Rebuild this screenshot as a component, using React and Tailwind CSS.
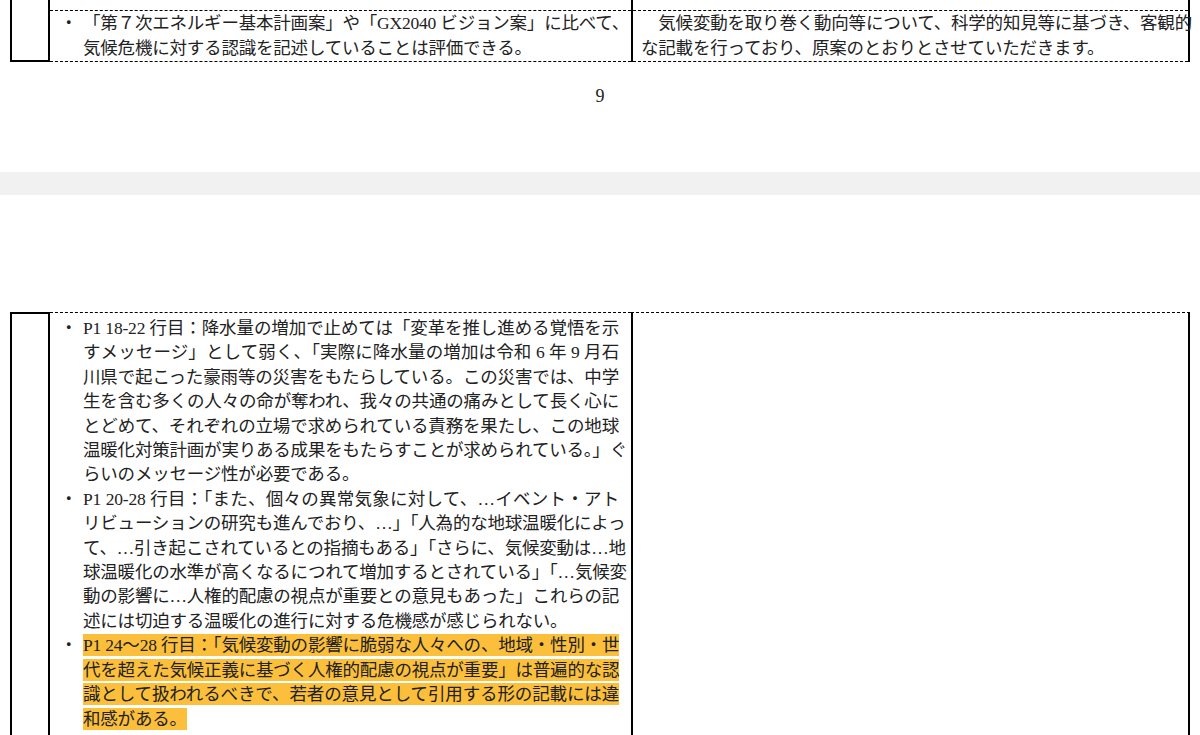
const F = { fontFamily: '"Liberation Serif", "Noto Sans CJK JP", serif' };

function L({ children, last }) {
  return (
    <div className={"whitespace-nowrap " + (last ? "" : "text-justify [text-align-last:justify]")}>{children}</div>
  );
}
function H({ children }) {
  return <span className="bg-[#fbbf3c] py-[1px]">{children}</span>;
}
function Item({ lines, hl }) {
  return (
    <div className="flex">
      <div className="w-[27px] shrink-0 pl-[4px]">・</div>
      <div className="flex-1 min-w-0">
        {lines.map((t, i) => (
          <L key={i} last={i === lines.length - 1}>{hl ? <H>{t}</H> : t}</L>
        ))}
      </div>
    </div>
  );
}

export default function App() {
  return (
    <div className="w-[1200px] h-[735px] overflow-hidden bg-white text-[#222] text-[17.5px] leading-[24.4px] tracking-[-0.2px]" style={F}>
      <div className="h-[172px] relative">
        <div className="ml-[10px] w-[1180px] flex h-[62px]">
          <div className="w-[40px] shrink-0 border-l-[2px] border-r-[2px] border-b-[2px] border-black" />
          <div className="w-[581px] shrink-0 flex flex-col">
            <div className="h-[10px]" />
            <div className="flex-1 border-t border-b border-dashed border-black pl-[6px] pr-[10px] pt-[0px] leading-[25px]">
              <Item lines={["「第７次エネルギー基本計画案」や「GX2040 ビジョン案」に比べて、", "気候危機に対する認識を記述していることは評価できる。"]} />
            </div>
          </div>
          <div className="flex-1 min-w-0 flex flex-col border-l-[2px] border-r-[2px] border-black">
            <div className="h-[10px]" />
            <div className="flex-1 border-t border-b border-dashed border-black pl-[8px] pr-[10px] pt-[0px] leading-[25px]">
              <L>　気候変動を取り巻く動向等について、科学的知見等に基づき、客観的</L>
              <L last>な記載を行っており、原案のとおりとさせていただきます。</L>
            </div>
          </div>
        </div>
        <div className="text-center text-[18px] mt-[22px]">9</div>
      </div>
      <div className="h-[23px] bg-[#f1f1f1]" />
      <div className="pt-[117px]">
        <div className="ml-[10px] w-[1180px] flex h-[500px]">
          <div className="w-[40px] shrink-0 border-l-[2px] border-r-[2px] border-t-[2px] border-black" />
          <div className="w-[581px] shrink-0 border-t border-dashed border-black pl-[6px] pr-[12px] pt-[3px]">
            <Item lines={[
              "P1 18-22 行目：降水量の増加で止めては「変革を推し進める覚悟を示",
              "すメッセージ」として弱く、「実際に降水量の増加は令和 6 年 9 月石",
              "川県で起こった豪雨等の災害をもたらしている。この災害では、中学",
              "生を含む多くの人々の命が奪われ、我々の共通の痛みとして長く心に",
              "とどめて、それぞれの立場で求められている責務を果たし、この地球",
              "温暖化対策計画が実りある成果をもたらすことが求められている。」ぐ",
              "らいのメッセージ性が必要である。",
            ]} />
            <Item lines={[
              "P1 20-28 行目：「また、個々の異常気象に対して、…イベント・アト",
              "リビューションの研究も進んでおり、…」「人為的な地球温暖化によっ",
              "て、…引き起こされているとの指摘もある」「さらに、気候変動は…地",
              "球温暖化の水準が高くなるにつれて増加するとされている」「…気候変",
              "動の影響に…人権的配慮の視点が重要との意見もあった」これらの記",
              "述には切迫する温暖化の進行に対する危機感が感じられない。",
            ]} />
            <Item hl lines={[
              "P1 24～28 行目：「気候変動の影響に脆弱な人々への、地域・性別・世",
              "代を超えた気候正義に基づく人権的配慮の視点が重要」は普遍的な認",
              "識として扱われるべきで、若者の意見として引用する形の記載には違",
              "和感がある。",
            ]} />
          </div>
          <div className="flex-1 border-t border-dashed border-black border-l-[2px] border-r-[2px]" style={{ borderLeftStyle: "solid", borderRightStyle: "solid" }} />
        </div>
      </div>
    </div>
  );
}
